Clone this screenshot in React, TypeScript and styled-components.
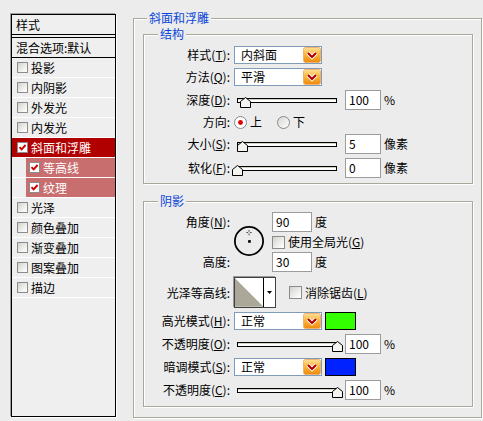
import React from 'react';
import styled, { createGlobalStyle } from 'styled-components';

const GlobalStyle = createGlobalStyle`
  html, body {
    margin: 0;
    padding: 0;
    background: #ececec;
  }
  body {
    font-family: "Noto Sans CJK SC", "Noto Sans", sans-serif;
    font-size: 12px;
    line-height: 14px;
    color: #000;
  }
`;

const styleItems = [
  { label: '投影' },
  { label: '内阴影' },
  { label: '外发光' },
  { label: '内发光' },
  { label: '斜面和浮雕', checked: true, variant: 'active' },
  { label: '等高线', checked: true, variant: 'sub' },
  { label: '纹理', checked: true, variant: 'sub' },
  { label: '光泽' },
  { label: '颜色叠加' },
  { label: '渐变叠加' },
  { label: '图案叠加' },
  { label: '描边' },
];

type Variant = 'normal' | 'active' | 'sub';

function CheckBox({ checked, size = 11 }: { checked?: boolean; size?: number }) {
  return (
    <CheckBoxStyle $size={size} $checked={checked}>
      {checked && (
        <svg width={size - 2} height={size - 2} viewBox="0 0 9 9">
          <path d="M1.5 4.2 L3.6 6.4 L7.6 2" fill="none" stroke="#d00000" strokeWidth="1.9" />
        </svg>
      )}
    </CheckBoxStyle>
  );
}

function DropButton() {
  return (
    <svg width="18" height="16" viewBox="0 0 18 16">
      <defs>
        <linearGradient id="dropOrange" x1="0" y1="0" x2="0" y2="1">
          <stop offset="0" stopColor="#ffe29a" />
          <stop offset="0.45" stopColor="#fbb73c" />
          <stop offset="1" stopColor="#ef8a0c" />
        </linearGradient>
      </defs>
      <rect x="0.5" y="0.5" width="17" height="15" rx="2" fill="url(#dropOrange)" stroke="#f0b070" />
      <path d="M5 6 L9 10 L13 6" fill="none" stroke="#fff" strokeWidth="4" strokeLinejoin="miter" />
      <path d="M5 6 L9 10 L13 6" fill="none" stroke="#b00000" strokeWidth="2.2" />
    </svg>
  );
}

function Select({ value }: { value: string }) {
  return (
    <SelectStyle>
      <span>{value}</span>
      <DropButton />
    </SelectStyle>
  );
}

function Slider({ value }: { value: number }) {
  return (
    <SliderStyle>
      <Track />
      <Thumb style={{ left: value - 5.5 }} width="11" height="11" viewBox="0 0 11 11">
        <polygon points="0.5,4.5 5.5,0.5 10.5,4.5 10.5,10.5 0.5,10.5" fill="#f4f4f0" stroke="#000" />
      </Thumb>
    </SliderStyle>
  );
}

function Radio({ on }: { on?: boolean }) {
  return (
    <svg width="13" height="13" viewBox="0 0 13 13">
      <defs>
        <linearGradient id="radioFill" x1="0" y1="0" x2="1" y2="1">
          <stop offset="0" stopColor="#d6d6d0" />
          <stop offset="1" stopColor="#ffffff" />
        </linearGradient>
      </defs>
      <circle cx="6.5" cy="6.5" r="6" fill={on ? '#fff' : 'url(#radioFill)'} stroke="#888" />
      {on && <circle cx="6.5" cy="6.5" r="2.4" fill="#e00000" />}
    </svg>
  );
}

function AngleDial() {
  return (
    <svg width="34" height="34" viewBox="0 0 34 34">
      <circle cx="17" cy="17" r="16" fill="none" stroke="#000" strokeWidth="2" />
      <rect x="16" y="16" width="3" height="3" fill="#000" />
      <rect x="16.5" y="4.5" width="1" height="2" fill="#333" />
      <rect x="16.5" y="8.5" width="1" height="2" fill="#333" />
      <rect x="14" y="7" width="2" height="1" fill="#333" />
      <rect x="18" y="7" width="2" height="1" fill="#333" />
    </svg>
  );
}

function ContourPicker() {
  return (
    <ContourBox>
      <svg width="29" height="29" viewBox="0 0 29 29">
        <polygon points="0,0 29,29 0,29" fill="#aca899" />
      </svg>
      <ContourArrow>
        <svg width="5" height="3" viewBox="0 0 5 3">
          <polygon points="0,0 5,0 2.5,3" fill="#000" />
        </svg>
      </ContourArrow>
    </ContourBox>
  );
}

function App() {
  return (
    <Dialog>
      <GlobalStyle />
      <StyleList>
        <ListHeader>样式</ListHeader>
        <BlendRow>混合选项:默认</BlendRow>
        {styleItems.map((item) => (
          <ItemRow key={item.label}>
            <ItemBody $variant={(item.variant ?? 'normal') as Variant}>
              <CheckBox checked={item.checked} />
              <span>{item.label}</span>
            </ItemBody>
          </ItemRow>
        ))}
      </StyleList>

      <Group $mt={11} $pad="0 8px 10px 9px" $w={349}>
        <GroupTitle $ml={4}>斜面和浮雕</GroupTitle>

        <Group $mt={2} $pad="5px 0 5px 0">
          <GroupTitle $ml={14}>结构</GroupTitle>
          <Rows>
            <Row $h={18}>
              <Label>样式(<u>T</u>):</Label>
              <Select value="内斜面" />
            </Row>
            <Row $h={18}>
              <Label>方法(<u>Q</u>):</Label>
              <Select value="平滑" />
            </Row>
            <Row $h={20}>
              <Label>深度(<u>D</u>):</Label>
              <Slider value={8} />
              <NumInput $w={36}>100</NumInput>
              <Unit>%</Unit>
            </Row>
            <Row $h={16}>
              <Label>方向:</Label>
              <RadioItem>
                <Radio on />
                <span>上</span>
              </RadioItem>
              <RadioItem>
                <Radio />
                <span>下</span>
              </RadioItem>
            </Row>
            <Row $h={20}>
              <Label>大小(<u>S</u>):</Label>
              <Slider value={5} />
              <NumInput $w={36}>5</NumInput>
              <Unit>像素</Unit>
            </Row>
            <Row $h={20}>
              <Label>软化(<u>F</u>):</Label>
              <Slider value={0} />
              <NumInput $w={36}>0</NumInput>
              <Unit>像素</Unit>
            </Row>
          </Rows>
        </Group>

        <Group $mt={10} $pad="4px 0 6px 0">
          <GroupTitle $ml={14}>阴影</GroupTitle>
          <Rows>
            <AngleBlock>
              <AngleLabel $row={1}>角度(<u>N</u>):</AngleLabel>
              <DialCell>
                <AngleDial />
              </DialCell>
              <AngleControl $row={1}>
                <NumInput $w={40}>90</NumInput>
                <Unit>度</Unit>
              </AngleControl>
              <AngleControl $row={2}>
                <CheckBox size={13} />
                <CheckText>使用全局光(<u>G</u>)</CheckText>
              </AngleControl>
              <AngleLabel $row={3}>高度:</AngleLabel>
              <AngleControl $row={3}>
                <NumInput $w={40}>30</NumInput>
                <Unit>度</Unit>
              </AngleControl>
            </AngleBlock>
            <Row $h={31}>
              <Label>光泽等高线:</Label>
              <ContourPicker />
              <AntiAlias>
                <CheckBox size={13} />
                <CheckText>消除锯齿(<u>L</u>)</CheckText>
              </AntiAlias>
            </Row>
            <Row $h={18}>
              <Label>高光模式(<u>H</u>):</Label>
              <Select value="正常" />
              <Swatch $color="#33ff00" />
            </Row>
            <Row $h={20}>
              <Label>不透明度(<u>O</u>):</Label>
              <Slider value={100} />
              <NumInput $w={36}>100</NumInput>
              <Unit>%</Unit>
            </Row>
            <Row $h={18}>
              <Label>暗调模式(<u>S</u>):</Label>
              <Select value="正常" />
              <Swatch $color="#0022ff" />
            </Row>
            <Row $h={20}>
              <Label>不透明度(<u>C</u>):</Label>
              <Slider value={100} />
              <NumInput $w={36}>100</NumInput>
              <Unit>%</Unit>
            </Row>
          </Rows>
        </Group>
      </Group>
    </Dialog>
  );
}

const Dialog = styled.div`
  display: flex;
  align-items: flex-start;
  width: 483px;
  height: 421px;
  overflow: hidden;
`;

const StyleList = styled.div`
  box-sizing: border-box;
  width: 105px;
  height: 403px;
  margin: 14px 0 0 11px;
  border: 1px solid #000;
  box-shadow: -1px -1px 0 #a0a0a0, 1px 1px 0 #fff;
  background: #efefef;
  flex-shrink: 0;
`;

const ListHeader = styled.div`
  height: 19px;
  line-height: 19px;
  padding-left: 4px;
  border-bottom: 4px double #000;
  background: #efefef;
`;

const BlendRow = styled.div`
  height: 19px;
  line-height: 19px;
  padding-left: 4px;
  border-bottom: 1px solid #000;
  white-space: nowrap;
`;

const ItemRow = styled.div`
  display: flex;
  height: 19px;
  border-bottom: 1px solid #fff;
`;

const ItemBody = styled.div<{ $variant: Variant }>`
  flex: 1;
  display: flex;
  align-items: center;
  gap: 3px;
  margin-left: ${({ $variant }) => ($variant === 'sub' ? 14 : 0)}px;
  padding-left: ${({ $variant }) => ($variant === 'sub' ? 3 : 5)}px;
  background: ${({ $variant }) =>
    $variant === 'active' ? '#b00000' : $variant === 'sub' ? '#c86e6e' : 'transparent'};
  color: ${({ $variant }) => ($variant === 'normal' ? '#000' : '#fff')};
  white-space: nowrap;
`;

const CheckBoxStyle = styled.span<{ $size: number; $checked?: boolean }>`
  box-sizing: border-box;
  display: inline-flex;
  align-items: center;
  justify-content: center;
  width: ${({ $size }) => $size}px;
  height: ${({ $size }) => $size}px;
  border: 1px solid #8c8c8c;
  background: ${({ $checked }) =>
    $checked ? '#fff' : 'linear-gradient(135deg, #d2d2cc 0%, #f4f4f2 70%, #fff 100%)'};
  flex-shrink: 0;
`;

const Group = styled.fieldset<{ $mt: number; $pad: string; $w?: number }>`
  box-sizing: border-box;
  ${({ $w }) => ($w ? `width: ${$w}px;` : '')}
  min-width: 0;
  margin: ${({ $mt }) => $mt}px 0 0 0;
  padding: ${({ $pad }) => $pad};
  border: 1px solid #aca899;
  box-shadow: inset 1px 1px 0 #fff, 1px 1px 0 #fff;
  &:first-of-type {
    margin-left: 17px;
  }
  & & {
    margin-left: 0;
  }
`;

const GroupTitle = styled.legend<{ $ml: number }>`
  margin-left: ${({ $ml }) => $ml}px;
  padding: 0 2px;
  line-height: 14px;
  color: #0a46d8;
  background: #ececec;
`;

const Rows = styled.div`
  display: flex;
  flex-direction: column;
  gap: 4px;
`;

const Row = styled.div<{ $h: number }>`
  display: flex;
  align-items: center;
  height: ${({ $h }) => $h}px;
`;

const Label = styled.span`
  width: 86px;
  margin-right: 4px;
  text-align: right;
  white-space: nowrap;
  flex-shrink: 0;
`;

const SelectStyle = styled.div`
  box-sizing: border-box;
  display: flex;
  align-items: center;
  justify-content: space-between;
  width: 88px;
  height: 18px;
  padding-left: 6px;
  border: 1px solid #7f9db9;
  background: #fff;
`;

const SliderStyle = styled.div`
  position: relative;
  width: 100px;
  height: 20px;
  margin: 0 8px 0 3px;
  flex-shrink: 0;
`;

const Track = styled.div`
  box-sizing: border-box;
  margin-top: 8px;
  height: 5px;
  border: 1px solid #000;
  background: #fff;
  box-shadow: inset 0 1px 0 #d4d0c8;
`;

const Thumb = styled.svg`
  position: absolute;
  top: 7px;
`;

const NumInput = styled.div<{ $w: number }>`
  box-sizing: border-box;
  width: ${({ $w }) => $w}px;
  height: 20px;
  line-height: 18px;
  padding-left: 3px;
  border: 1px solid #9c9c9c;
  background: #fff;
  flex-shrink: 0;
`;

const Unit = styled.span`
  margin-left: 3px;
  white-space: nowrap;
`;

const RadioItem = styled.label`
  display: flex;
  align-items: center;
  gap: 3px;
  margin-right: 15px;
`;

const AngleBlock = styled.div`
  display: grid;
  grid-template-columns: 86px 34px auto;
  grid-template-rows: 20px 18px 20px;
  row-gap: 1px;
  column-gap: 0;
  height: 61px;
`;

const AngleLabel = styled.span<{ $row: number }>`
  grid-column: 1;
  grid-row: ${({ $row }) => $row};
  align-self: center;
  text-align: right;
  white-space: nowrap;
`;

const DialCell = styled.div`
  grid-column: 2;
  grid-row: 1 / span 3;
  align-self: center;
  margin-left: 4px;
  margin-top: -2px;
  display: flex;
`;

const AngleControl = styled.div<{ $row: number }>`
  grid-column: 3;
  grid-row: ${({ $row }) => $row};
  display: flex;
  align-items: center;
  margin-left: 8px;
`;

const CheckText = styled.span`
  margin-left: 3px;
  white-space: nowrap;
`;

const ContourBox = styled.div`
  box-sizing: border-box;
  display: flex;
  width: 42px;
  height: 31px;
  border: 1px solid #404040;
  box-shadow: -1px -1px 0 #9a9a9a;
  background: #fff;
  flex-shrink: 0;
`;

const ContourArrow = styled.div`
  display: flex;
  align-items: center;
  justify-content: center;
  width: 11px;
  border-left: 1px solid #000;
`;

const AntiAlias = styled.label`
  display: flex;
  align-items: center;
  margin-left: 13px;
`;

const Swatch = styled.div<{ $color: string }>`
  box-sizing: border-box;
  width: 31px;
  height: 18px;
  margin-left: 3px;
  border: 1px solid #000;
  background: ${({ $color }) => $color};
`;

export default App;
